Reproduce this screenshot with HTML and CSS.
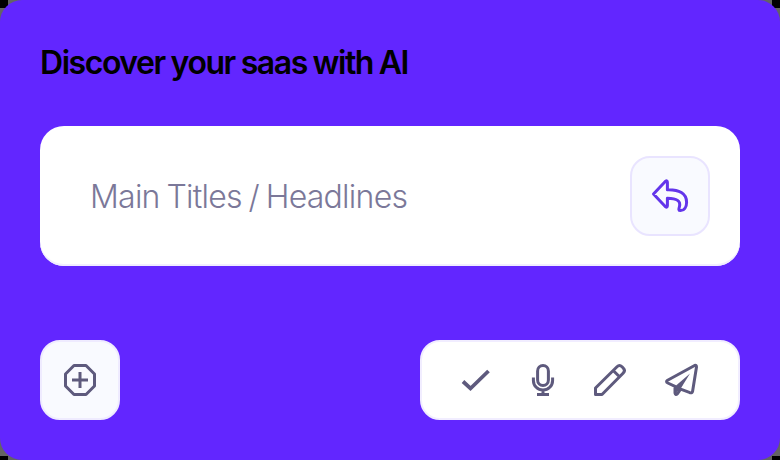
FILE: index.html
```html
<!DOCTYPE html>
<html lang="en">
<head>
<meta charset="utf-8">
<title>Discover your saas with AI</title>
<link rel="stylesheet" href="styles.css">
</head>
<body>
<main class="card">
  <h1 class="title">Discover your saas with AI</h1>
  <section class="prompt">
    <span class="placeholder">Main Titles / Headlines</span>
    <button class="tile reply" aria-label="Reply">
      <svg class="icon" viewBox="0 0 40 40"><path d="M3.5 18 15.5 5.3Q17.4 4 17.4 6.4V13.8C29 13.5 36.6 17.2 36.6 26.2C36.6 31.5 34 34.6 30.6 34.6C28.2 34.6 28.8 33 29.4 30.8C31 25 27 22.3 17.4 22.2V29.6Q17.4 32 15.5 30.7Z"/></svg>
    </button>
  </section>
  <footer class="actions">
    <button class="tile" aria-label="Add">
      <svg class="icon" viewBox="0 0 40 40"><path d="M14 5.5H26L34.5 14V26L26 34.5H14L5.5 26V14ZM20 12V28M12 20H28"/></svg>
    </button>
    <div class="toolbar">
      <svg class="icon check" viewBox="0 0 40 40"><path d="m3 21.5 7.5 7L28.5 11"/></svg>
      <svg class="icon mic" viewBox="0 0 40 40"><rect x="14.6" y="5.5" width="10.8" height="20" rx="5.4"/><path d="M10.4 17.5V20.5A9.6 9.6 0 0 0 29.6 20.5V17.5M20 30.5V34.5M14 34.5H26"/></svg>
      <svg class="icon pencil" viewBox="0 0 40 40"><path d="M5.5 34.5V28L27 6.7Q29.5 4.3 32 6.8L33.2 8Q35.7 10.5 33.3 13L12 34.5ZM23.2 10.5 29.5 16.8"/></svg>
      <svg class="icon send" viewBox="0 0 40 40"><path d="M32.6 5.5 5.6 20.3Q3.4 21.8 5.8 23L13 26.3V33Q13.4 35.6 15.5 33.6L18.6 29.2 28 32.7Q30.2 33.4 30.6 31.2L34.5 7Q34.4 4.8 32.6 5.5Z"/><path class="fold" d="M28 13.5 13.2 26.2V33.3L18.6 28.8Z"/></svg>
    </div>
  </footer>
</main>
</body>
</html>
```
FILE: styles.css
```css
* { box-sizing: border-box; }
body {
  margin: 0;
  width: 780px;
  height: 460px;
  overflow: hidden;
  background:
    linear-gradient(#000, #000) 0 0 / 8px 8px no-repeat,
    linear-gradient(#000, #000) 100% 0 / 8px 8px no-repeat,
    linear-gradient(#000, #000) 0 100% / 8px 4px no-repeat,
    linear-gradient(#000, #000) 100% 100% / 8px 4px no-repeat,
    #646464;
  font-family: Inter, "Liberation Sans", sans-serif;
}
.card {
  height: 460px;
  padding: 42px 40px 40px;
  border-radius: 22px;
  background: #6226ff;
  display: flex;
  flex-direction: column;
}
.title {
  margin: 0;
  height: 42px;
  font-size: 32px;
  line-height: 42px;
  font-weight: 600;
  letter-spacing: -1.45px;
  word-spacing: -0.8px;
  white-space: nowrap;
  color: #000;
}
.prompt {
  height: 140px;
  margin-top: 42px;
  padding: 0 30px 0 50px;
  border-radius: 24px;
  background: #fff;
  box-shadow: inset 0 -2px #f1edff;
  display: flex;
  align-items: center;
  justify-content: space-between;
}
.placeholder {
  padding-top: 2px;
  font-size: 32px;
  line-height: 42px;
  font-weight: 300;
  letter-spacing: -0.75px;
  word-spacing: -1.5px;
  white-space: nowrap;
  color: #7b7899;
}
.tile {
  width: 80px;
  height: 80px;
  padding: 0;
  border: 2px solid #efebff;
  border-radius: 20px;
  background: #f9faff;
  color: #5e5a7d;
  display: grid;
  place-items: center;
}
.reply {
  border-color: #e9e4ff;
  color: #6335eb;
}
.actions {
  margin-top: auto;
  display: flex;
  justify-content: space-between;
}
.toolbar {
  width: 320px;
  height: 80px;
  padding: 0 36px 0 38px;
  border: 2px solid #f1edff;
  border-radius: 20px;
  background: #fff;
  color: #5e5a7d;
  display: flex;
  align-items: center;
}
.icon {
  width: 40px;
  height: 40px;
  flex: none;
  fill: none;
  stroke: currentColor;
  stroke-width: 3;
  stroke-linejoin: round;
}
.check { stroke-width: 3.8; stroke-linejoin: miter; }
.mic { margin-left: 23px; }
.pencil { margin-left: 27px; }
.send { margin-left: 32px; }
.fold { fill: currentColor; stroke: none; }
```
